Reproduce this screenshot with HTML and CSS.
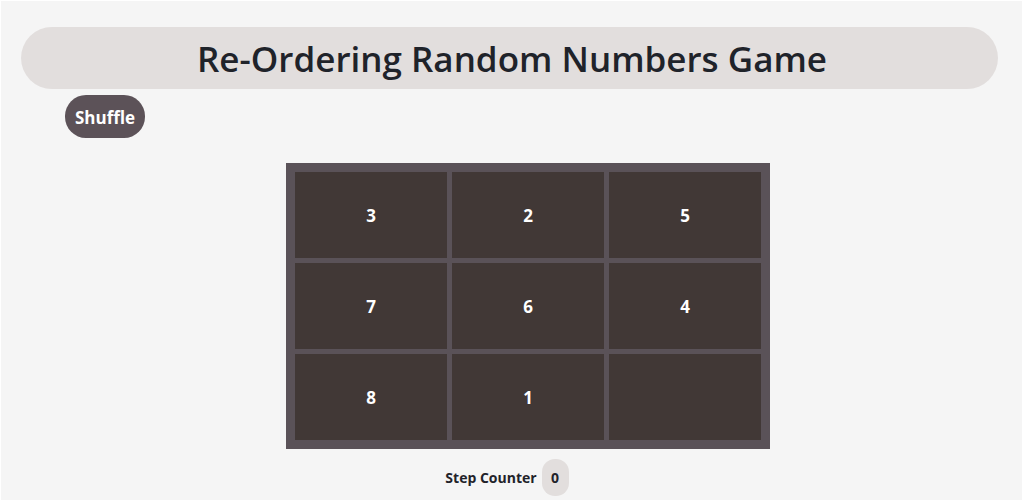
FILE: index.html
```html
<!DOCTYPE html>
<html lang="en">
<head>
<meta charset="utf-8">
<title>Re-Ordering Random Numbers Game</title>
<link rel="stylesheet" href="styles.css">
</head>
<body>
<div class="page">
  <header class="title-bar">
    <h1 class="title">Re-Ordering Random Numbers Game</h1>
  </header>
  <div class="controls">
    <button class="shuffle">Shuffle</button>
  </div>
  <div class="board-wrap">
    <div class="board">
      <div class="cell">3</div>
      <div class="cell">2</div>
      <div class="cell">5</div>
      <div class="cell">7</div>
      <div class="cell">6</div>
      <div class="cell">4</div>
      <div class="cell">8</div>
      <div class="cell">1</div>
      <div class="cell"></div>
    </div>
  </div>
  <div class="counter">
    <span class="counter-label">Step Counter</span>
    <span class="counter-value">0</span>
  </div>
</div>
</body>
</html>
```
FILE: styles.css
```css
html { background: #ffffff; }
body {
  margin: 0;
  font-family: "Open Sans", "Noto Sans", sans-serif;
}
.page {
  margin: 1px 2px 2px 1px;
  min-height: 499px;
  background: #f5f5f5;
  box-sizing: border-box;
  padding: 26px 24px 0 20px;
}
.title-bar {
  background: #e2dedd;
  border-radius: 31px;
  height: 62px;
  display: flex;
  align-items: center;
  justify-content: center;
  padding-left: 5px;
}
.title {
  margin: 0;
  font-size: 35px;
  font-weight: 600;
  color: #1f232a;
}
.controls {
  display: flex;
  padding: 6px 0 0 44px;
}
.shuffle {
  height: 43px;
  padding: 2px 10px 0;
  border: none;
  border-radius: 21px;
  background: #5c5258;
  color: #ffffff;
  font-family: inherit;
  font-weight: 700;
  font-size: 17px;
}
.board-wrap {
  display: flex;
  justify-content: center;
  padding: 25px 0 0 37px;
}
.board {
  background: #5a5258;
  padding: 9px;
  display: grid;
  grid-template-columns: repeat(3, 152px);
  grid-template-rows: repeat(3, 86px);
  gap: 5px;
}
.cell {
  background: #413836;
  color: #ffffff;
  font-weight: 700;
  font-size: 17px;
  display: flex;
  align-items: center;
  justify-content: center;
}
.counter {
  display: flex;
  align-items: center;
  justify-content: center;
  gap: 5px;
  padding: 10px 5px 0 0;
}
.counter-label {
  font-size: 14px;
  font-weight: 700;
  color: #1f232a;
}
.counter-value {
  background: #e2dedd;
  border-radius: 13px;
  width: 27px;
  height: 37px;
  display: flex;
  align-items: center;
  justify-content: center;
  font-size: 14px;
  font-weight: 700;
  color: #1f232a;
}
```
